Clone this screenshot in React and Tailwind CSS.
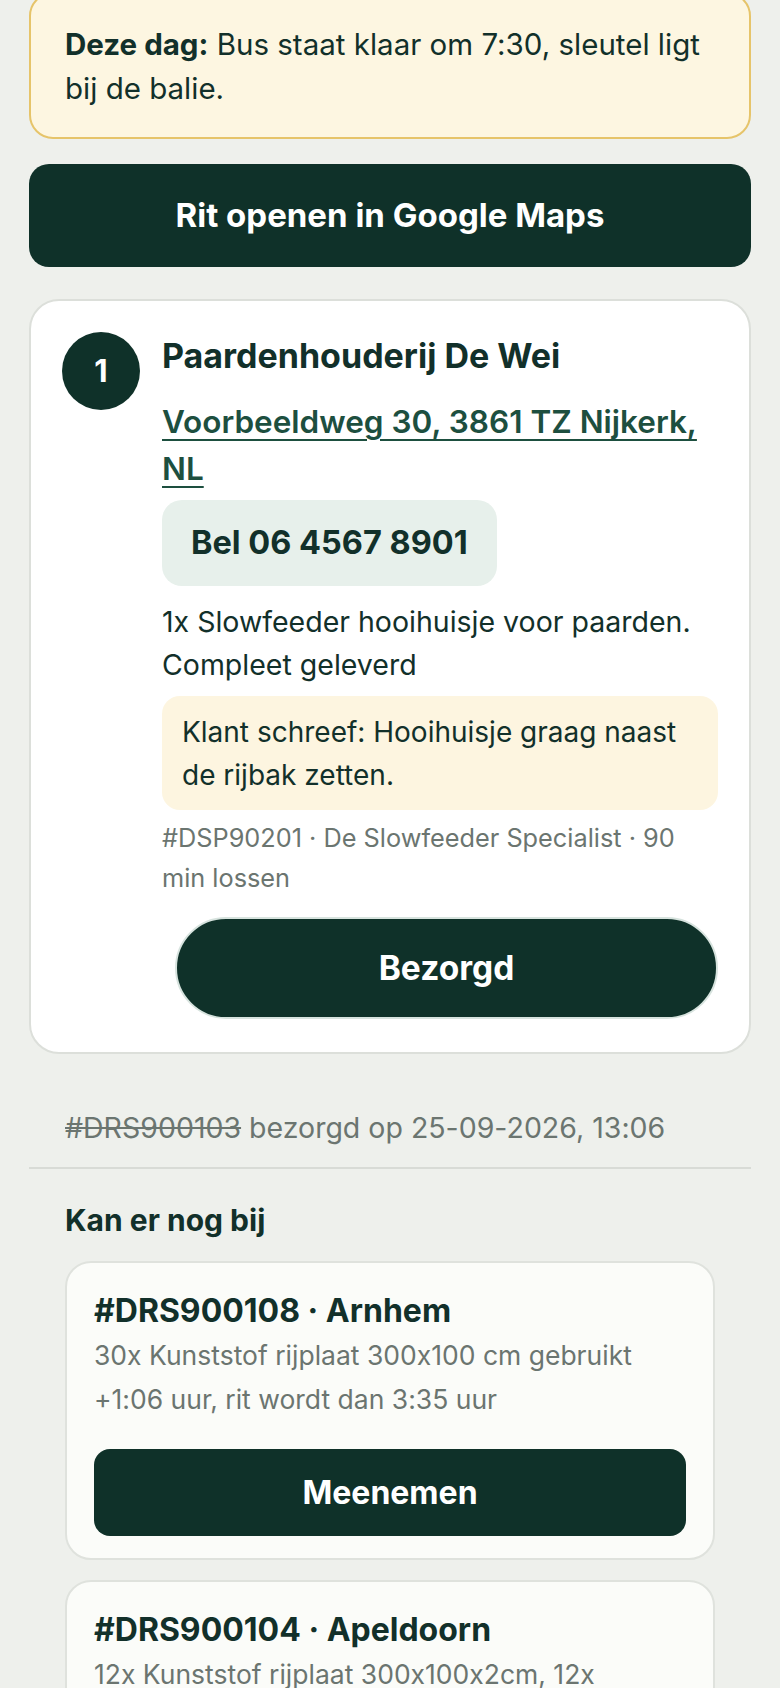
import React from "react";

const FONT = {
  fontFamily: "Inter, 'Noto Sans', 'Liberation Sans', sans-serif",
  fontFeatureSettings: "'calt' 0",
};

function Suggestion({ code, city, lines, withButton }) {
  return (
    <div className="rounded-[26px] border-2 border-[#dfe2dd] bg-[#fbfcf9] px-[27px] pb-[22px] pt-[26px]">
      <p className="text-[32px] font-bold leading-[44px] text-[#12302a]">
        {code} · {city}
      </p>
      {lines.map((line) => (
        <p key={line} className="text-[26.5px] leading-[44px] text-[#6b7570]">
          {line}
        </p>
      ))}
      {withButton ? (
        <button
          type="button"
          className="mt-[28px] flex h-[87px] w-full items-center justify-center rounded-[16px] bg-[#0f3129] text-[32px] font-bold text-white"
        >
          Meenemen
        </button>
      ) : null}
    </div>
  );
}

export default function App() {
  return (
    <div style={FONT} className="min-h-screen overflow-hidden bg-[#eef0ec] text-[#12302a]">
      <div className="-mt-[8px] px-[29px]">
        <div className="rounded-[24px] border-2 border-[#e6c46a] bg-[#fdf6e1] px-[34px] pb-[27px] pt-[28px]">
          <p className="text-[29.5px] leading-[44px]">
            <span className="font-bold">Deze dag:</span> Bus staat klaar om 7:30, sleutel ligt
            <br />
            bij de balie.
          </p>
        </div>

        <button
          type="button"
          className="mt-[25px] flex h-[103px] w-full items-center justify-center rounded-[20px] bg-[#0f3129] text-[33px] font-bold text-white"
        >
          Rit openen in Google Maps
        </button>

        <div className="mt-[32px] rounded-[30px] border-2 border-[#dcdfda] bg-white px-[31px] pb-[33px] pt-[31px]">
          <div className="flex gap-[22px]">
            <div className="flex h-[78px] w-[78px] shrink-0 items-center justify-center rounded-full bg-[#0f3129] text-[31px] font-bold text-white">
              1
            </div>
            <div className="min-w-0 flex-1">
              <p className="pt-[3px] text-[34px] font-bold leading-[42px]">Paardenhouderij De Wei</p>
              <a
                href="#"
                className="mt-[21px] block text-[31.5px] font-semibold leading-[47px] text-[#1d4f3f] underline decoration-2 underline-offset-[6px]"
              >
                Voorbeeldweg 30, 3861 TZ Nijkerk,
                <br />
                NL
              </a>
              <button
                type="button"
                className="mt-[8px] flex h-[86px] items-center rounded-[20px] bg-[#e7f0eb] px-[29px] text-[32.5px] font-bold text-[#12302a]"
              >
                Bel 06 4567 8901
              </button>
              <p className="mt-[14px] text-[28.5px] leading-[43px]">
                1x Slowfeeder hooihuisje voor paarden.
                <br />
                Compleet geleverd
              </p>
              <div className="mt-[10px] rounded-[18px] bg-[#fdf5e0] px-[20px] pb-[13px] pt-[15px] text-[28px] leading-[43px]">
                Klant schreef: Hooihuisje graag naast
                <br />
                de rijbak zetten.
              </div>
              <p className="mt-[8px] text-[25.3px] leading-[40px] text-[#6b7570]">
                #DSP90201 · De Slowfeeder Specialist · 90
                <br />
                min lossen
              </p>
              <button
                type="button"
                className="ml-[13px] mt-[19px] flex h-[102px] w-[calc(100%-13px)] items-center justify-center rounded-full border-2 border-[#d7e3de] bg-[#0f3129] text-[33.5px] font-bold text-white"
              >
                Bezorgd
              </button>
            </div>
          </div>
        </div>

        <p className="mt-[52px] px-[36px] text-[28.5px] leading-[44px] text-[#6b7570]">
          <span className="line-through">#DRS900103</span> bezorgd op 25-09-2026, 13:06
        </p>

        <div className="mt-[17px] h-[2px] bg-[#d8dbd6]" />

        <div className="px-[36px]">
          <p className="mt-[31px] text-[30px] font-bold leading-[40px]">Kan er nog bij</p>
          <div className="mt-[21px] flex flex-col gap-[20px]">
            <Suggestion
              code="#DRS900108"
              city="Arnhem"
              lines={["30x Kunststof rijplaat 300x100 cm gebruikt", "+1:06 uur, rit wordt dan 3:35 uur"]}
              withButton
            />
            <Suggestion
              code="#DRS900104"
              city="Apeldoorn"
              lines={["12x Kunststof rijplaat 300x100x2cm, 12x", "Kunststof rijplaat 300x100x2cm gebruikt"]}
              withButton
            />
          </div>
        </div>
      </div>
    </div>
  );
}
